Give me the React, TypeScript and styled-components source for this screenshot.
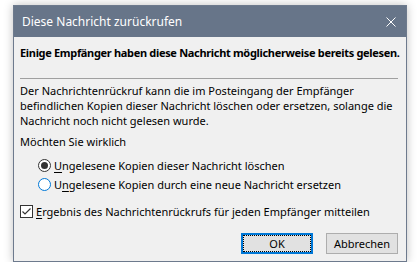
import * as React from 'react'
import styled, { createGlobalStyle } from 'styled-components'

const Global = createGlobalStyle`
  html, body { margin: 0; padding: 0; background: #ffffff; }
  body { font-family: "Noto Sans", "Open Sans", sans-serif; font-size: 11px; color: #000; }
`

const Window = styled.div`
  margin: 5px 0 0 13px;
  width: 392px;
  height: 255px;
  border: 1px solid #6d7a8d;
  background: #f0f0f0;
  box-shadow: 0 0 9px rgba(0, 0, 0, 0.25);
  display: flex;
  flex-direction: column;
`

const TitleBar = styled.div`
  height: 31px;
  background: #677589;
  display: flex;
  align-items: center;
  justify-content: space-between;
  padding: 0 10px 0 8px;
  color: #ffffff;
  font-size: 12px;
`

const Close = styled.svg`
  display: block;
`

const Body = styled.div`
  flex: 1;
  display: flex;
  flex-direction: column;
  padding: 0 8px 7px 6px;
`

const Heading = styled.div`
  margin-top: 9px;
  font-weight: bold;
  line-height: 14px;
  letter-spacing: -0.32px;
  white-space: nowrap;
`

const Rule = styled.div`
  margin-top: 18px;
  height: 1px;
  background: #a0a0a0;
`

const Text = styled.div<{ $gap: number }>`
  margin-top: ${p => p.$gap}px;
  line-height: 15px;
  white-space: nowrap;
`

const Group = styled.div<{ $gap: number; $indent: number }>`
  margin-top: ${p => p.$gap}px;
  padding-left: ${p => p.$indent}px;
  display: flex;
  flex-direction: column;
`

const Option = styled.div`
  height: 19px;
  display: flex;
  align-items: center;
  gap: 3px;
  white-space: nowrap;
`

const Radio = styled.span<{ $on?: boolean }>`
  width: 13px;
  height: 13px;
  box-sizing: border-box;
  border-radius: 50%;
  border: 1px solid ${p => (p.$on ? '#333333' : '#0078d7')};
  background: #ffffff;
  display: flex;
  align-items: center;
  justify-content: center;
  &::after {
    content: '';
    display: ${p => (p.$on ? 'block' : 'none')};
    width: 7px;
    height: 7px;
    border-radius: 50%;
    background: #333333;
  }
`

const Check = styled.span`
  width: 13px;
  height: 13px;
  box-sizing: border-box;
  border: 1px solid #333333;
  background: #ffffff;
  display: flex;
  align-items: center;
  justify-content: center;
`

const Key = styled.span`
  text-decoration: underline;
  text-underline-offset: 2px;
`

const Buttons = styled.div`
  margin-top: auto;
  display: flex;
  justify-content: flex-end;
  gap: 13px;
`

const Button = styled.button<{ $primary?: boolean }>`
  width: 72px;
  height: 21px;
  box-sizing: border-box;
  padding: 0;
  font: inherit;
  color: #000;
  background: #e1e1e1;
  border: ${p => (p.$primary ? '2px solid #0078d7' : '1px solid #adadad')};
  outline: ${p => (p.$primary ? '1px dotted #000' : 'none')};
  outline-offset: ${p => (p.$primary ? '-3px' : '0')};
`

export default function App() {
  return (
    <>
      <Global />
      <Window>
        <TitleBar>
          <span>Diese Nachricht zurückrufen</span>
          <Close width="10" height="10" viewBox="0 0 10 10">
            <path d="M0.5 0.5 L9.5 9.5 M9.5 0.5 L0.5 9.5" stroke="#fff" strokeWidth="1" />
          </Close>
        </TitleBar>
        <Body>
          <Heading>Einige Empfänger haben diese Nachricht möglicherweise bereits gelesen.</Heading>
          <Rule />
          <Text $gap={4}>
            Der Nachrichtenrückruf kann die im Posteingang der Empfänger<br />
            befindlichen Kopien dieser Nachricht löschen oder ersetzen, solange die<br />
            Nachricht noch nicht gelesen wurde.
          </Text>
          <Text $gap={6}>Möchten Sie wirklich</Text>
          <Group $gap={7} $indent={18}>
            <Option>
              <Radio $on />
              <span><Key>U</Key>ngelesene Kopien dieser Nachricht löschen</span>
            </Option>
            <Option>
              <Radio />
              <span>U<Key>n</Key>gelesene Kopien durch eine neue Nachricht ersetzen</span>
            </Option>
          </Group>
          <Group $gap={8} $indent={0}>
            <Option>
              <Check>
                <svg width="11" height="11" viewBox="0 0 11 11">
                  <path d="M1.5 5.5 L4 8 L9.5 2.5" stroke="#333" strokeWidth="1.2" fill="none" />
                </svg>
              </Check>
              <span><Key>E</Key>rgebnis des Nachrichtenrückrufs für jeden Empfänger mitteilen</span>
            </Option>
          </Group>
          <Buttons>
            <Button $primary>OK</Button>
            <Button>Abbrechen</Button>
          </Buttons>
        </Body>
      </Window>
    </>
  )
}
